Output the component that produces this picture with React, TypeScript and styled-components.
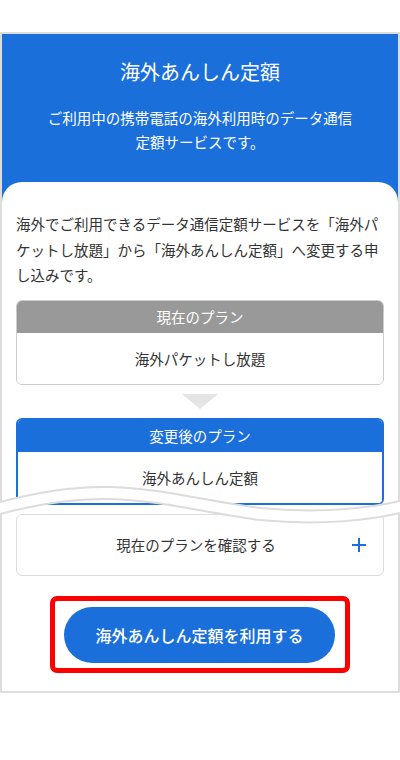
import React from "react";
import styled, { createGlobalStyle } from "styled-components";

const BLUE = "#1b6fdb";
const TEXT = "#333333";
const LINE = "#dcdcdc";

const GlobalStyle = createGlobalStyle`
  html, body {
    margin: 0;
    padding: 0;
    background: #fff;
  }
  body {
    font-family: "Noto Sans CJK JP", "Noto Sans", sans-serif;
    color: ${TEXT};
  }
  * {
    box-sizing: border-box;
  }
`;

const Page = styled.div`
  width: 400px;
  padding-top: 32px;
`;

const Frame = styled.div`
  position: relative;
  border: 2px solid #dddddd;
  background: #fff;
`;

const Header = styled.header`
  background: ${BLUE};
  color: #fff;
  text-align: center;
  padding: 24px 16px 48px;
`;

const Title = styled.h1`
  margin: 0;
  font-size: 20px;
  line-height: 28px;
  font-weight: 400;
`;

const Lead = styled.p`
  margin: 20px 0 0;
  font-size: 14.5px;
  line-height: 24px;
`;

const Card = styled.section`
  position: relative;
  margin-top: -20px;
  background: #fff;
  border-radius: 20px 20px 0 0;
  padding: 29px 14px 18px;
`;

const Intro = styled.p`
  margin: 0;
  font-size: 14.5px;
  line-height: 25.5px;
`;

const PlanBox = styled.div<{ $color: string; $border: number }>`
  margin-top: 12px;
  border: ${(p) => p.$border}px solid ${(p) => p.$color};
  border-radius: 6px;
  overflow: hidden;
`;

const PlanHead = styled.div<{ $bg: string }>`
  height: 32px;
  display: flex;
  align-items: center;
  justify-content: center;
  background: ${(p) => p.$bg};
  color: #fff;
  font-size: 14.5px;
`;

const PlanBody = styled.div`
  height: 51px;
  display: flex;
  align-items: center;
  justify-content: center;
  font-size: 14.5px;
  background: #fff;
`;

const Arrow = styled.div`
  width: 0;
  height: 0;
  margin: 9px auto -3px;
  border-left: 18px solid transparent;
  border-right: 18px solid transparent;
  border-top: 15px solid #e4e4e4;
`;

const Accordion = styled.div`
  margin-top: 9px;
  height: 62px;
  border: 1px solid ${LINE};
  border-radius: 6px;
  display: flex;
  align-items: center;
  padding: 0 16px 0 24px;
`;

const AccordionLabel = styled.span`
  flex: 1;
  text-align: center;
  font-size: 14.5px;
`;

const Highlight = styled.div`
  width: 300px;
  margin: 20px auto 0;
  border: 5px solid #ff0000;
  border-radius: 7px;
  padding: 6px 10px 5px 9px;
`;

const ApplyButton = styled.button`
  display: block;
  width: 100%;
  height: 56px;
  border: none;
  border-radius: 28px;
  background: ${BLUE};
  color: #fff;
  font-family: "Noto Sans CJK JP", "Noto Sans", sans-serif;
  font-size: 16px;
  font-weight: 500;
`;

const Wave = styled.svg`
  position: absolute;
  left: -2px;
  top: 446px;
  width: 400px;
  height: 50px;
`;

const top = "M0 22 C30 14, 70 6, 110 7 C160 8, 210 22, 260 28 C320 34, 370 28, 400 21";
const bottom = "M0 34 C30 26, 70 18, 110 19 C160 20, 210 34, 260 40 C320 46, 370 40, 400 33";
const band =
  top +
  " L400 33 C370 40, 320 46, 260 40 C210 34, 160 20, 110 19 C70 18, 30 26, 0 34 Z";

const Plus = () => (
  <svg width="16" height="16" viewBox="0 0 16 16">
    <path d="M8 1 V15 M1 8 H15" stroke={BLUE} strokeWidth="2" fill="none" />
  </svg>
);

export default function App() {
  return (
    <Page>
      <GlobalStyle />
      <Frame>
        <Header>
          <Title>海外あんしん定額</Title>
          <Lead>
            ご利用中の携帯電話の海外利用時のデータ通信
            <br />
            定額サービスです。
          </Lead>
        </Header>
        <Card>
          <Intro>
            海外でご利用できるデータ通信定額サービスを「海外パケットし放題」から「海外あんしん定額」へ変更する申し込みです。
          </Intro>
          <PlanBox $color="#cccccc" $border={1}>
            <PlanHead $bg="#999999">現在のプラン</PlanHead>
            <PlanBody>海外パケットし放題</PlanBody>
          </PlanBox>
          <Arrow />
          <PlanBox $color={BLUE} $border={2}>
            <PlanHead $bg={BLUE}>変更後のプラン</PlanHead>
            <PlanBody>海外あんしん定額</PlanBody>
          </PlanBox>
          <Accordion>
            <AccordionLabel>現在のプランを確認する</AccordionLabel>
            <Plus />
          </Accordion>
          <Highlight>
            <ApplyButton type="button">海外あんしん定額を利用する</ApplyButton>
          </Highlight>
        </Card>
        <Wave viewBox="0 0 400 50">
          <path d={band} fill="#fff" />
          <path d={top} stroke={LINE} strokeWidth="2" fill="none" />
          <path d={bottom} stroke={LINE} strokeWidth="2" fill="none" />
        </Wave>
      </Frame>
    </Page>
  );
}
